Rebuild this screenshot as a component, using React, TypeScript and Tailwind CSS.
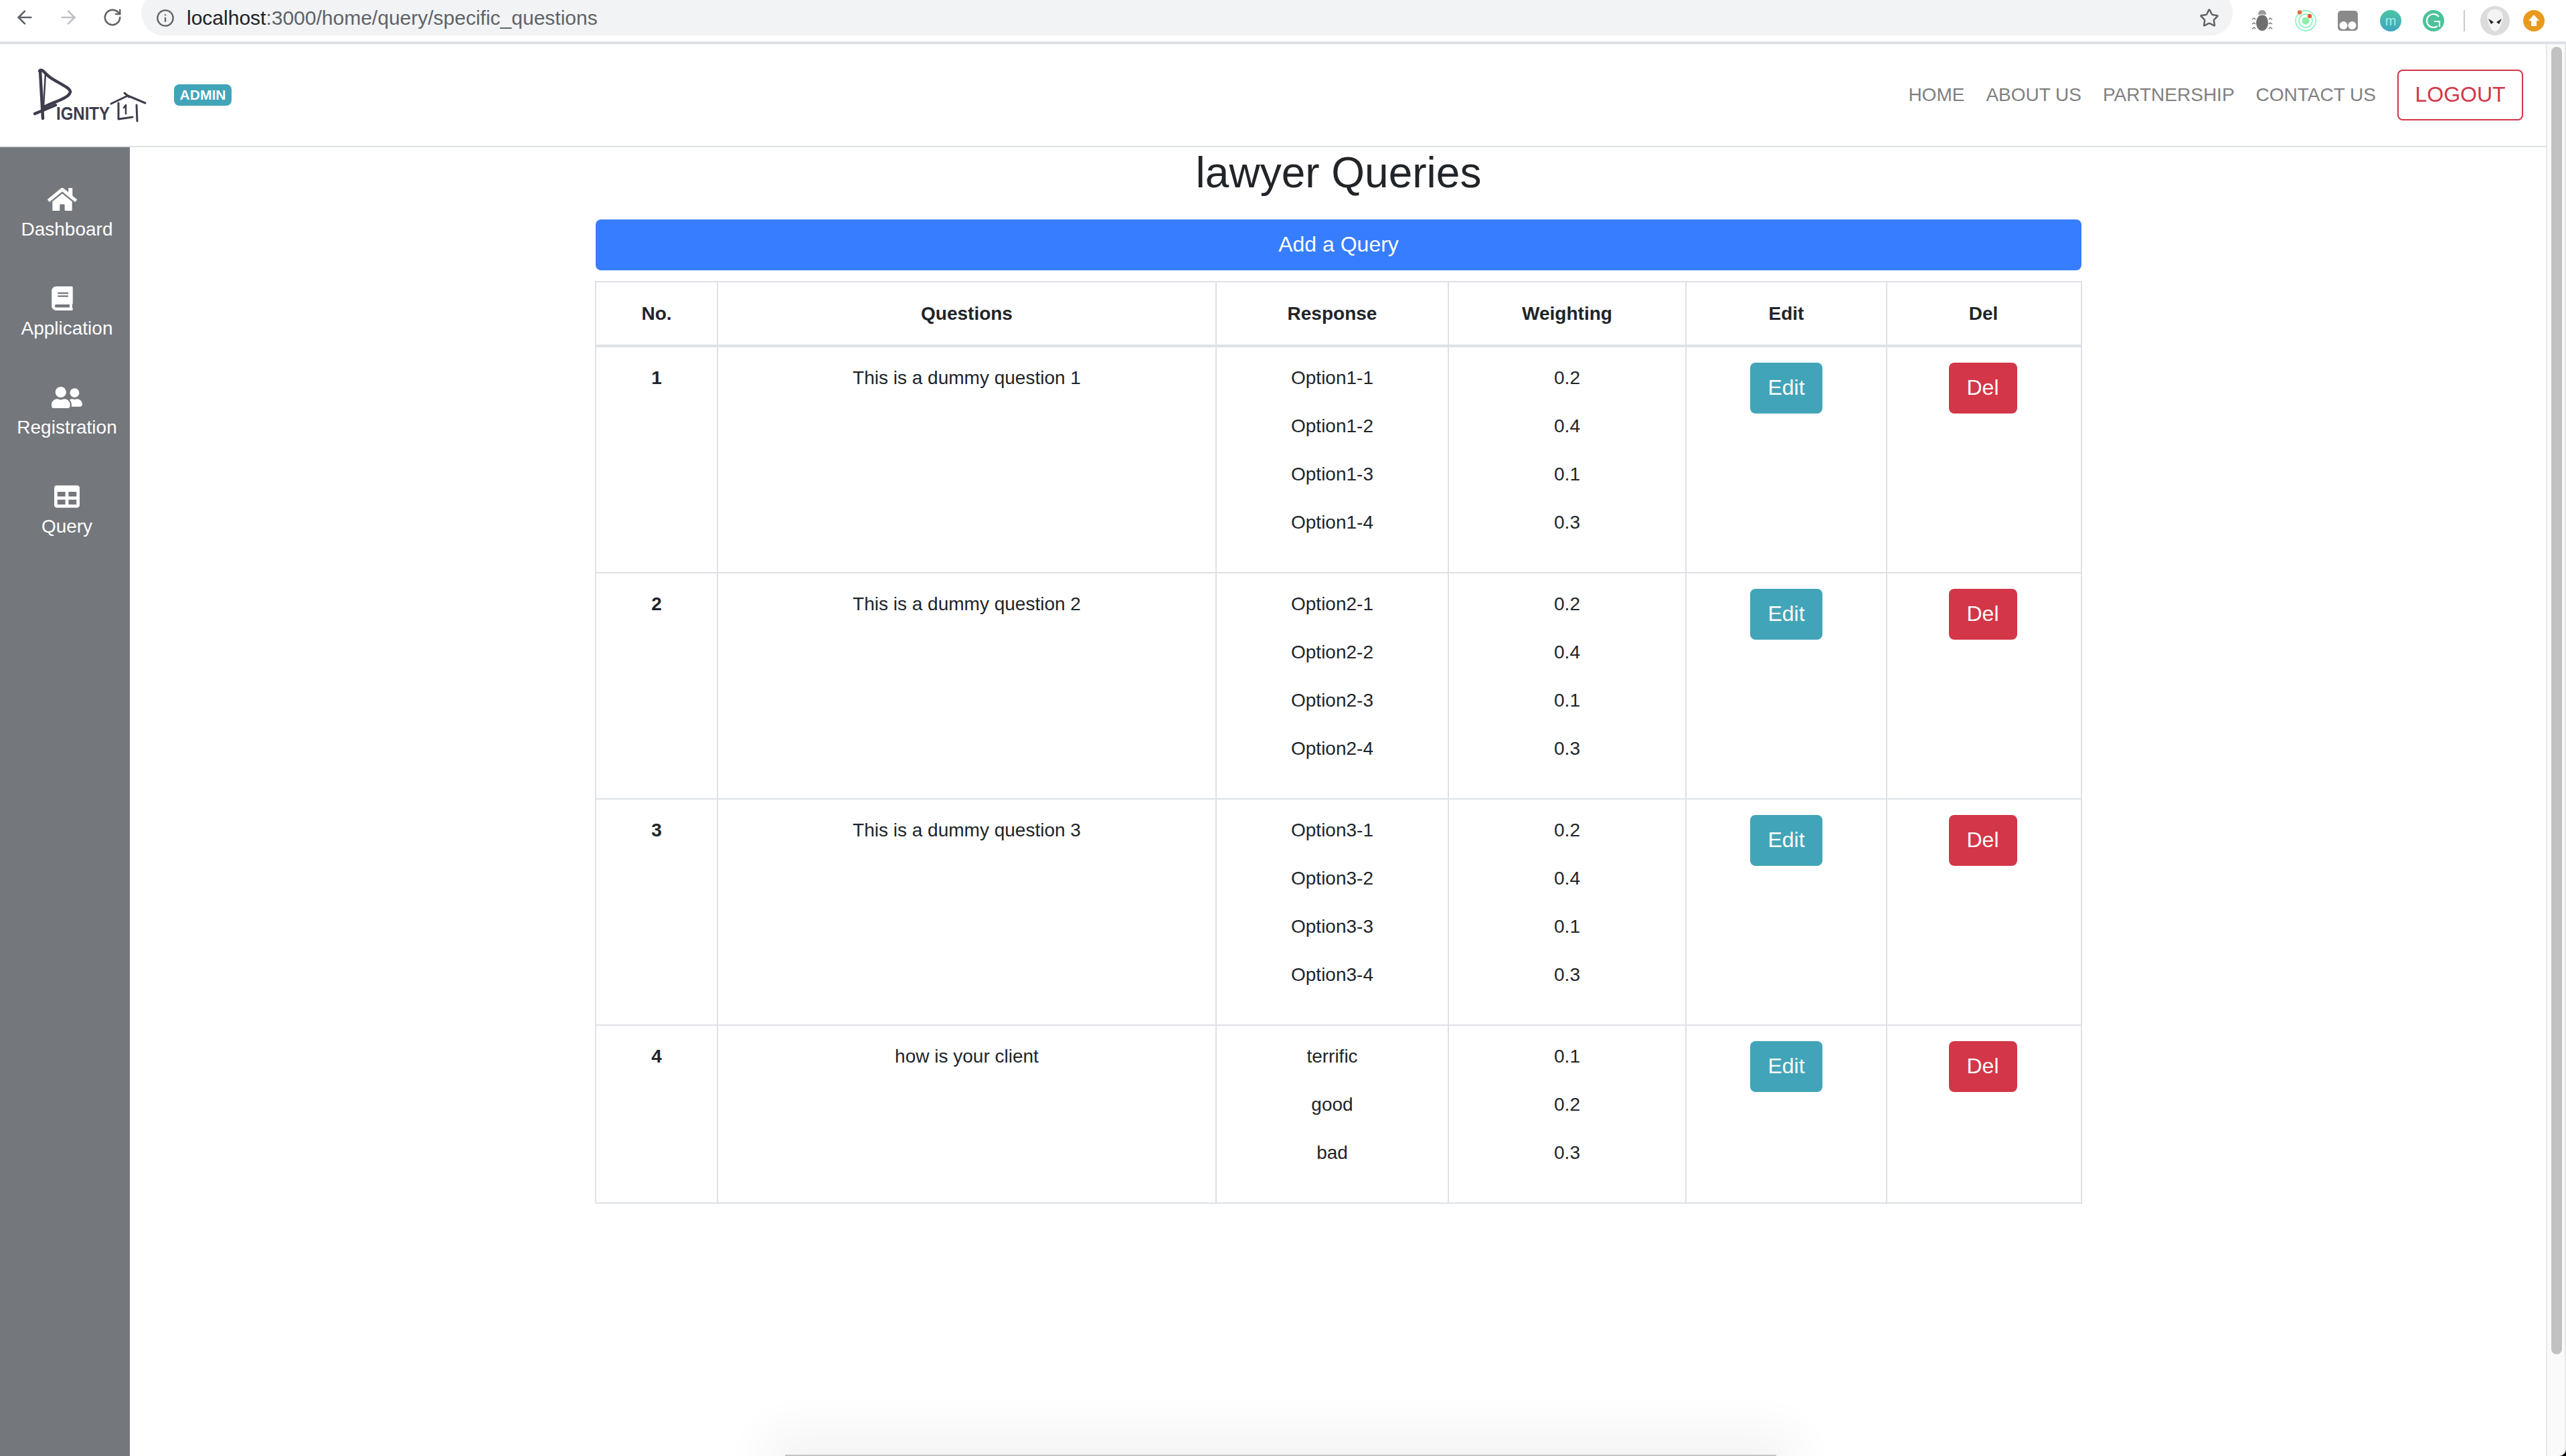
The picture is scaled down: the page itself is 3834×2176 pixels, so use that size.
import React from "react";
import { ArrowLeft, ArrowRight, RotateCw, Info, Star } from "lucide-react";
import { FaHome, FaBook, FaUserFriends, FaTable } from "react-icons/fa";

type Row = { no: number; q: string; opts: [string, string][] };

const rows: Row[] = [
  { no: 1, q: "This is a dummy question 1", opts: [["Option1-1", "0.2"], ["Option1-2", "0.4"], ["Option1-3", "0.1"], ["Option1-4", "0.3"]] },
  { no: 2, q: "This is a dummy question 2", opts: [["Option2-1", "0.2"], ["Option2-2", "0.4"], ["Option2-3", "0.1"], ["Option2-4", "0.3"]] },
  { no: 3, q: "This is a dummy question 3", opts: [["Option3-1", "0.2"], ["Option3-2", "0.4"], ["Option3-3", "0.1"], ["Option3-4", "0.3"]] },
  { no: 4, q: "how is your client", opts: [["terrific", "0.1"], ["good", "0.2"], ["bad", "0.3"]] },
];

function Extensions() {
  return (
    <div className="flex items-center">
      <svg width="32" height="34" viewBox="0 0 32 34" className="ml-[28px]">
        <path d="M10 8 Q10 1 16 1 Q22 1 22 8 Z" fill="#9a9a9a" />
        <ellipse cx="16" cy="20" rx="9" ry="12" fill="#6f6f6f" />
        <path d="M7 10 Q16 6 25 10" stroke="#fff" strokeWidth="1" fill="none" />
        <path d="M1 15l3-2 2 2M26 15l2-2 3 2M1 22l3-2 2 2M26 22l2-2 3 2M1 29l3-2 2 2M26 29l2-2 3 2" stroke="#666" strokeWidth="1.3" fill="none" />
      </svg>
      <svg width="34" height="34" viewBox="0 0 34 34" className="ml-[32px]">
        <circle cx="17" cy="17" r="15" fill="none" stroke="#8ff5c4" strokeWidth="1.8" />
        <circle cx="17" cy="17" r="10" fill="none" stroke="#8ff5c4" strokeWidth="1.8" />
        <circle cx="17" cy="17" r="5.5" fill="#8fefa8" />
        <circle cx="8" cy="4.5" r="3.2" fill="#ea6a3a" />
        <circle cx="23" cy="10" r="3.2" fill="#ea5a3a" />
      </svg>
      <svg width="32" height="32" viewBox="0 0 32 32" className="ml-[30px]">
        <rect x="1" y="1" width="30" height="30" rx="5" fill="#8a8a8a" />
        <circle cx="9.5" cy="23" r="6" fill="#fff" />
        <circle cx="22.5" cy="23" r="6" fill="#fff" />
      </svg>
      <div className="ml-[32px] flex h-[32px] w-[32px] items-center justify-center rounded-full bg-gradient-to-b from-[#4cc3a4] to-[#3fa6c0] text-[20px] leading-none font-light text-[#a8ece0]">
        m
      </div>
      <svg width="32" height="32" viewBox="0 0 32 32" className="ml-[32px]">
        <circle cx="16" cy="16" r="16" fill="#4cc29b" />
        <path d="M24 10 A10 10 0 1 0 22 24 M17 17 H25 V25" stroke="#fff" strokeWidth="2.2" fill="none" />
      </svg>
      <div className="ml-[29px] h-[32px] w-[2px] bg-[#c8cacc]" />
      <svg width="44" height="44" viewBox="0 0 44 44" className="ml-[23px]">
        <circle cx="22" cy="22" r="22" fill="#dcdcdc" />
        <path d="M22 5 C33 5 35 15 33 22 C31 30 26 38 22 38 C18 38 13 30 11 22 C9 15 11 5 22 5 Z" fill="#f4f4f4" />
        <path d="M12 19 L20 24 L16 27 Z M32 19 L24 24 L28 27 Z" fill="#222" />
      </svg>
      <svg width="32" height="32" viewBox="0 0 32 32" className="ml-[20px]">
        <circle cx="16" cy="16" r="16" fill="#e99a1c" />
        <path d="M16 7 L24 16 H20 V24 H12 V16 H8 Z" fill="#fff" />
      </svg>
    </div>
  );
}

function BrowserBar() {
  return (
    <div className="flex h-[66px] shrink-0 items-start overflow-hidden border-b-4 border-[#dee1e6] bg-white">
      <ArrowLeft size={32} strokeWidth={2} className="mt-[10px] ml-[21px] text-[#5f6368]" />
      <ArrowRight size={32} strokeWidth={2} className="mt-[10px] ml-[33px] text-[#bdc1c6]" />
      <RotateCw size={30} strokeWidth={2} className="mt-[11px] ml-[35px] text-[#5f6368]" />
      <div className="-mt-[14px] ml-[28px] flex h-[67px] w-[3125px] items-center rounded-full bg-[#f1f3f4] pt-[14px] pl-[22px]">
        <Info size={28} strokeWidth={2} className="text-[#5f6368]" />
        <div className="ml-[18px] text-[30px] leading-none text-[#5f6368]">
          <span className="text-[#202124]">localhost</span>:3000/home/query/specific_questions
        </div>
        <div className="flex-1" />
        <Star size={30} strokeWidth={2} className="mr-[20px] text-[#5f6368]" />
      </div>
      <div className="mt-[9px]">
        <Extensions />
      </div>
    </div>
  );
}

function Logo() {
  return (
    <svg width="180" height="90" viewBox="0 0 180 90" className="shrink-0">
      <g stroke="#3d3d4b" fill="none" strokeLinecap="round" strokeLinejoin="round">
        <path d="M10 9 L14 80" strokeWidth="4.5" />
        <path d="M18 12 L15 62" strokeWidth="2.5" />
        <path d="M9 9 C12 5 16 11 24 18 C36 27 54 33 55 40 C54 50 30 55 14 64" strokeWidth="4.5" />
        <path d="M2 73 L33 60" strokeWidth="4.5" />
        <path d="M116 58 L141 46 L167 57" strokeWidth="3" />
        <path d="M136 42 L143 48" strokeWidth="3" />
        <path d="M127 57 V81 L148 78" strokeWidth="3" />
        <path d="M154 60 L155 84" strokeWidth="3" />
        <path d="M138 60 V73 M135 64 L138 60" strokeWidth="2.5" />
      </g>
      <text x="34" y="82" fontSize="27" fontWeight="700" textLength="80" lengthAdjust="spacingAndGlyphs" fill="#3d3d4b" fontFamily="'Liberation Sans', Arial, sans-serif">
        IGNITY
      </text>
    </svg>
  );
}

function Navbar() {
  return (
    <nav className="flex h-[154px] shrink-0 items-center border-b-2 border-[#dfe1e4] bg-white pr-[34px] pl-[50px]">
      <Logo />
      <span className="ml-[30px] flex h-[32px] w-[86px] items-center justify-center rounded-[8px] bg-[#42a4b8] text-[21px] font-bold text-white">
        ADMIN
      </span>
      <div className="flex-1" />
      <div className="flex items-center gap-[32px] text-[28px] text-[#7f7f7f]">
        <span>HOME</span>
        <span>ABOUT US</span>
        <span>PARTNERSHIP</span>
        <span>CONTACT US</span>
        <button className="flex h-[76px] w-[188px] items-center justify-center rounded-[8px] border-2 border-[#d33648] bg-white pb-[2px] text-[32px] text-[#d33648]">
          LOGOUT
        </button>
      </div>
    </nav>
  );
}

function SideItem({ icon, label }: { icon: React.ReactNode; label: string }) {
  return (
    <div className="flex h-[148px] flex-col items-center pt-[60px] pl-[6px]">
      <div className="flex h-[36px] items-center justify-center">{icon}</div>
      <div className="mt-[7px] text-[28px] leading-[40px] text-white">{label}</div>
    </div>
  );
}

function Sidebar() {
  return (
    <aside className="w-[194px] shrink-0 bg-[#74777c]">
      <SideItem label="Dashboard" icon={<FaHome size={44} className="mr-[14px] text-white" />} />
      <SideItem label="Application" icon={<FaBook size={36} className="mr-[14px] text-white" />} />
      <SideItem label="Registration" icon={<FaUserFriends size={46} className="text-white" />} />
      <SideItem label="Query" icon={<FaTable size={38} className="text-white" />} />
    </aside>
  );
}

const th = "h-[96px] border-2 border-b-4 border-[#dee2e6] p-0 text-center align-middle text-[28px] font-bold text-[#212529]";
const td = "border-2 border-[#dee2e6] p-[24px] text-center align-top text-[28px] leading-[44px] text-[#212529]";

function QueryTable() {
  return (
    <table className="w-[2220px] table-fixed border-collapse">
      <colgroup>
        <col className="w-[182px]" />
        <col className="w-[745px]" />
        <col className="w-[347px]" />
        <col className="w-[355px]" />
        <col className="w-[300px]" />
        <col className="w-[291px]" />
      </colgroup>
      <thead>
        <tr>
          <th className={th}>No.</th>
          <th className={th}>Questions</th>
          <th className={th}>Response</th>
          <th className={th}>Weighting</th>
          <th className={th}>Edit</th>
          <th className={th + " pr-[2px]"}>Del</th>
        </tr>
      </thead>
      <tbody>
        {rows.map((r) => (
          <tr key={r.no}>
            <td className={td + " font-bold"}>{r.no}</td>
            <td className={td}>{r.q}</td>
            <td className={td}>
              {r.opts.map(([o]) => (
                <div key={o} className="mb-[28px]">{o}</div>
              ))}
            </td>
            <td className={td}>
              {r.opts.map(([o, w]) => (
                <div key={o} className="mb-[28px]">{w}</div>
              ))}
            </td>
            <td className={td}>
              <button className="mx-auto -mt-[1px] block h-[76px] w-[108px] rounded-[8px] bg-[#42a4b8] pb-[2px] text-[32px] leading-none text-white">Edit</button>
            </td>
            <td className={td}>
              <button className="mx-auto -mt-[1px] block h-[76px] w-[102px] -translate-x-[2px] rounded-[8px] bg-[#d33648] pb-[2px] text-[32px] leading-none text-white">Del</button>
            </td>
          </tr>
        ))}
      </tbody>
    </table>
  );
}

function Scrollbar() {
  return (
    <div className="w-[30px] shrink-0 bg-black">
      <div className="h-full rounded-br-[10px] border-r-2 border-l-2 border-[#e8e8e8] bg-[#fafafa] pt-[4px] pl-[6px]">
        <div className="h-[1954px] w-[16px] rounded-full bg-[#c1c1c1]" />
      </div>
    </div>
  );
}

export default function App() {
  return (
    <div className="relative flex h-[2176px] w-[3834px] flex-col overflow-hidden bg-white font-['Liberation_Sans',Arial,sans-serif]">
      <BrowserBar />
      <div className="flex min-h-0 flex-1">
        <div className="flex min-w-0 flex-1 flex-col">
          <Navbar />
          <div className="flex min-h-0 flex-1">
            <Sidebar />
            <main className="flex flex-1 flex-col items-center pl-[2px]">
              <h2 className="mb-[31px] text-[64px] leading-[77px] font-normal text-[#212529]">lawyer Queries</h2>
              <button className="mb-[16px] h-[76px] w-[2220px] rounded-[8px] bg-[#377dff] pb-[2px] text-[32px] text-white">Add a Query</button>
              <QueryTable />
            </main>
          </div>
        </div>
        <Scrollbar />
      </div>
      <div className="absolute bottom-0 left-[1173px] h-[2px] w-[1481px] bg-[#c4c4c4] shadow-[0_0_70px_30px_rgba(0,0,0,0.06)]" />
    </div>
  );
}
